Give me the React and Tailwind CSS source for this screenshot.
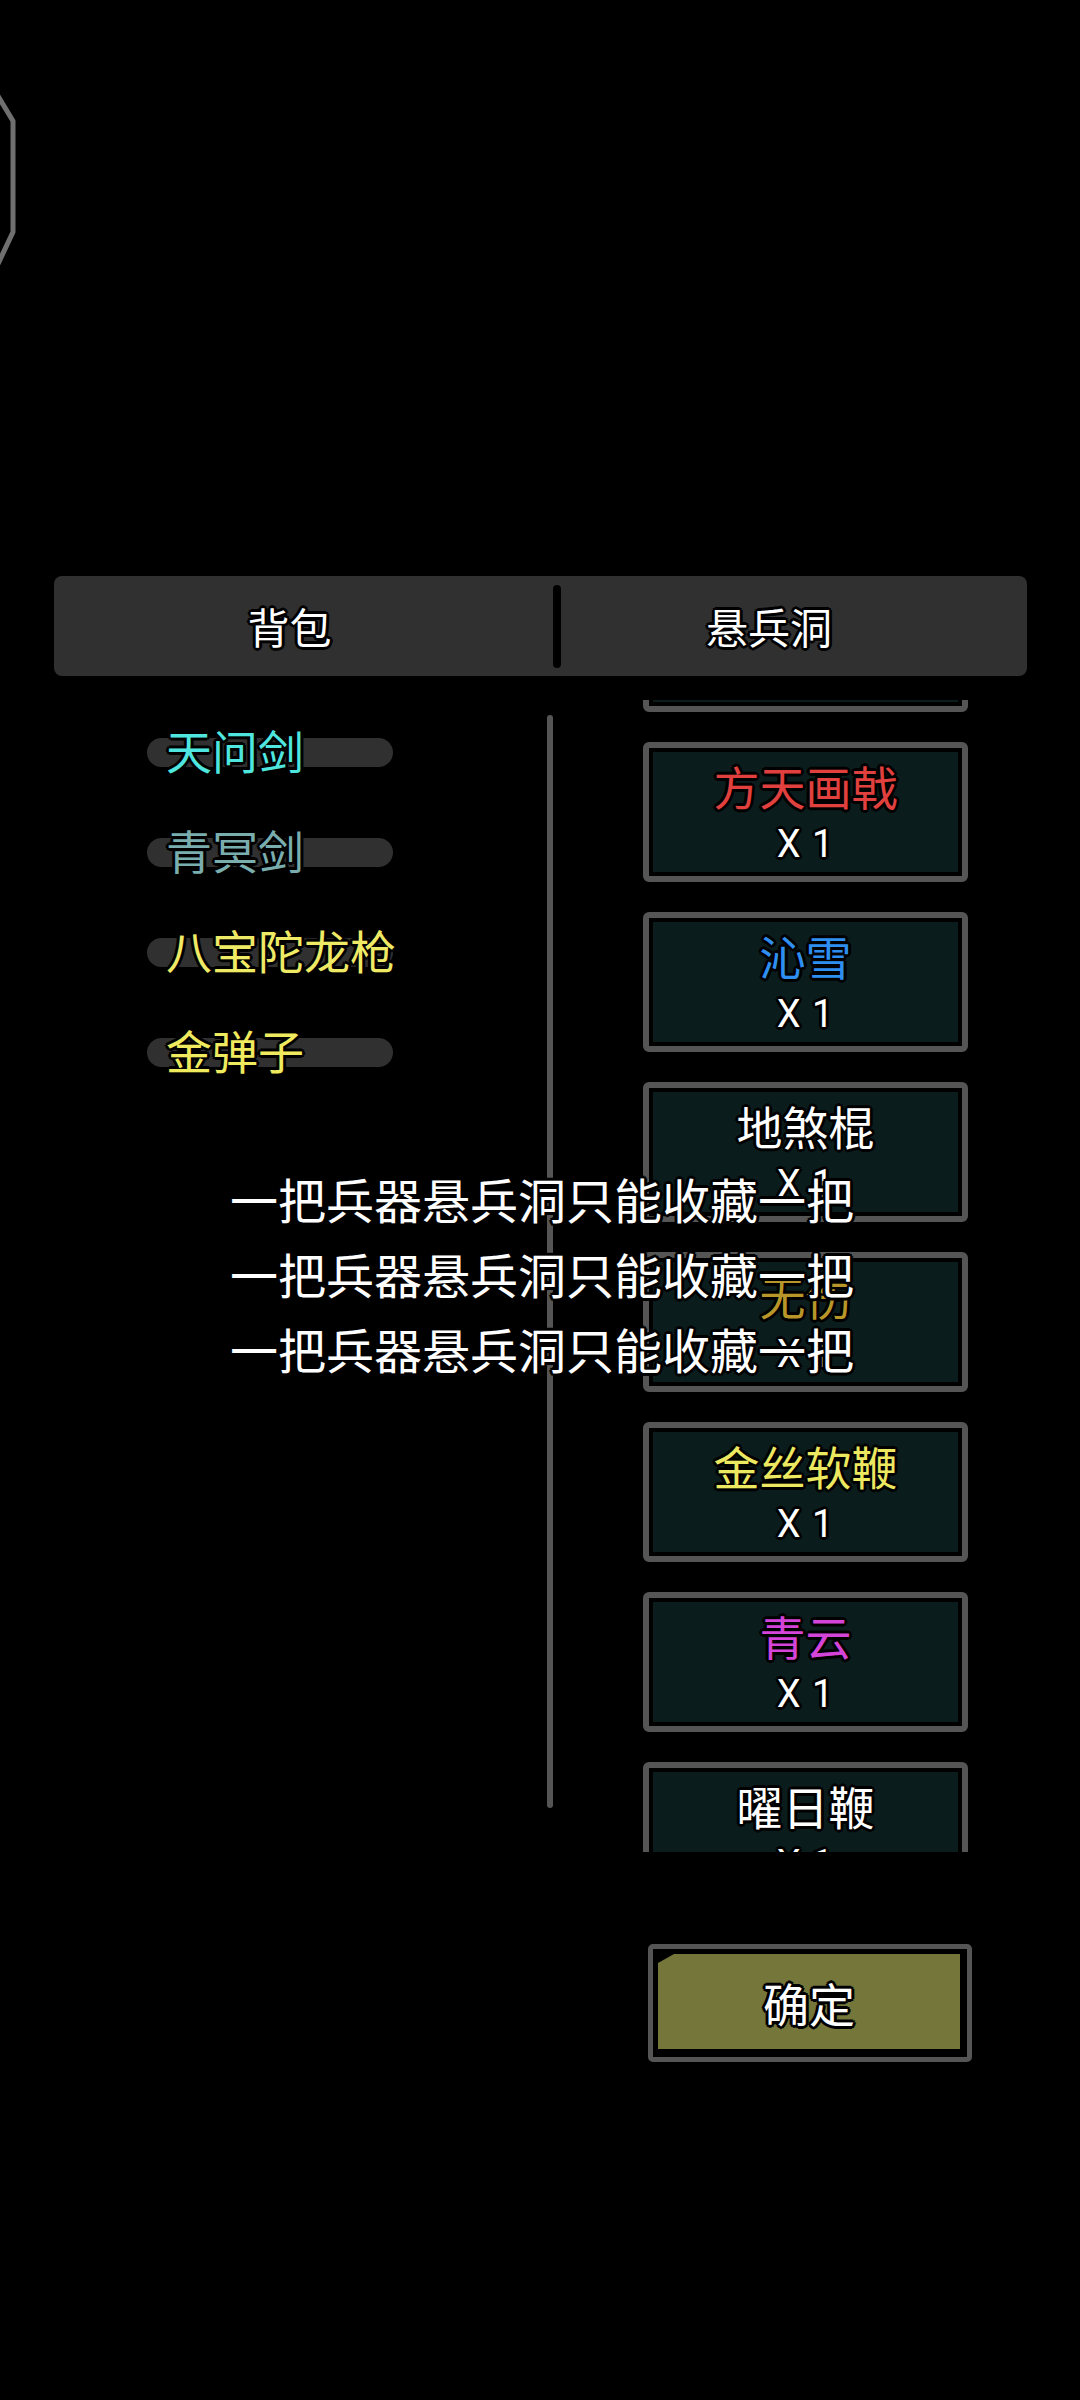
import React from "react";

// Outline used by every label in the game UI — thick black rim around light text.
const outline =
  "[text-shadow:2px_2px_0_#000,-2px_-2px_0_#000,2px_-2px_0_#000,-2px_2px_0_#000,0_3px_0_#000,0_-3px_0_#000,3px_0_0_#000,-3px_0_0_#000]";

const bag = [
  { name: "天问剑", color: "text-[#4fe6df]" },
  { name: "青冥剑", color: "text-[#7aaeae]" },
  { name: "八宝陀龙枪", color: "text-[#efea66]" },
  { name: "金弹子", color: "text-[#efea5e]" },
];

const vault = [
  { name: "", color: "text-white" },
  { name: "方天画戟", color: "text-[#e0413f]" },
  { name: "沁雪", color: "text-[#2f8ff0]" },
  { name: "地煞棍", color: "text-white" },
  { name: "无伤", color: "text-[#b8962a]" },
  { name: "金丝软鞭", color: "text-[#ece860]" },
  { name: "青云", color: "text-[#d444d8]" },
  { name: "曜日鞭", color: "text-white" },
];

function BagItem({ item }) {
  return (
    <div className="h-[100px] grid items-center">
      <div className="col-start-1 row-start-1 w-[246px] h-[29px] rounded-full bg-[#303030]" />
      <div className={`col-start-1 row-start-1 pl-[19px] pb-[6px] text-[46px] leading-[56px] whitespace-nowrap ${item.color} ${outline}`}>
        {item.name}
      </div>
    </div>
  );
}

function VaultCard({ item }) {
  return (
    <div className="shrink-0 h-[140px] w-[325px] border-[6px] border-[#555] rounded-[6px] bg-black p-[4px]">
      <div className="h-full bg-[#0b1c1c] flex flex-col items-center">
        <div className={`pt-[8px] text-[46px] leading-[50px] whitespace-nowrap ${item.color} ${outline}`}>
          {item.name || "\u00a0"}
        </div>
        <div className={`mt-[14px] font-['Roboto',sans-serif] text-[38px] leading-[40px] tracking-[1px] text-white ${outline}`}>X 1</div>
      </div>
    </div>
  );
}

export default function App() {
  return (
    <div className="relative w-[1080px] h-[2400px] bg-black overflow-hidden font-['Noto_Sans_CJK_SC','Noto_Sans',sans-serif] text-white">
      {/* edge of an off-screen button */}
      <div className="h-[576px] pt-[92px]">
        <svg width="20" height="175" viewBox="0 92 20 175" className="block">
          <polyline points="-2,96 13,121 13,232 -2,264" fill="none" stroke="#6f6f6f" strokeWidth="5" strokeLinejoin="round" />
        </svg>
      </div>

      {/* tabs */}
      <div className="ml-[54px] w-[973px] h-[100px] rounded-[8px] bg-[#303030] flex items-center">
        <div className={`w-[499px] pr-[28px] text-center text-[42px] leading-[50px] ${outline}`}>背包</div>
        <div className="w-[8px] h-[83px] rounded-full bg-black" />
        <div className={`flex-1 pr-[50px] text-center text-[42px] leading-[50px] ${outline}`}>悬兵洞</div>
      </div>

      {/* lists */}
      <div className="mt-[24px] h-[1152px] flex">
        <div className="w-[547px] pl-[147px] pt-[2px]">
          {bag.map((it) => (
            <BagItem key={it.name} item={it} />
          ))}
        </div>
        <div className="w-[6px] mt-[15px] h-[1093px] rounded-full bg-[#555]" />
        <div className="ml-[90px] w-[325px] h-full overflow-hidden">
          <div className="mt-[-128px] flex flex-col gap-[30px]">
            {vault.map((it, i) => (
              <VaultCard key={i} item={it} />
            ))}
          </div>
        </div>
      </div>

      {/* confirm */}
      <div className="mt-[92px] ml-[648px] w-[324px] h-[118px] border-[5px] border-[#555] rounded-[5px] bg-black pl-[5px] pt-[5px] pr-[7px] pb-[8px]">
        <div className="h-full bg-[#74763a] [clip-path:polygon(16px_0,100%_0,100%_100%,0_100%,0_9px)] flex items-center justify-center">
          <span className={`text-[46px] leading-[50px] ${outline}`}>确定</span>
        </div>
      </div>

      {/* toast */}
      <div className="absolute left-[230px] top-[1161px] flex flex-col">
        {[0, 1, 2].map((i) => (
          <div key={i} className={`text-[48px] leading-[75px] whitespace-nowrap text-white ${outline}`}>
            一把兵器悬兵洞只能收藏一把
          </div>
        ))}
      </div>
    </div>
  );
}
